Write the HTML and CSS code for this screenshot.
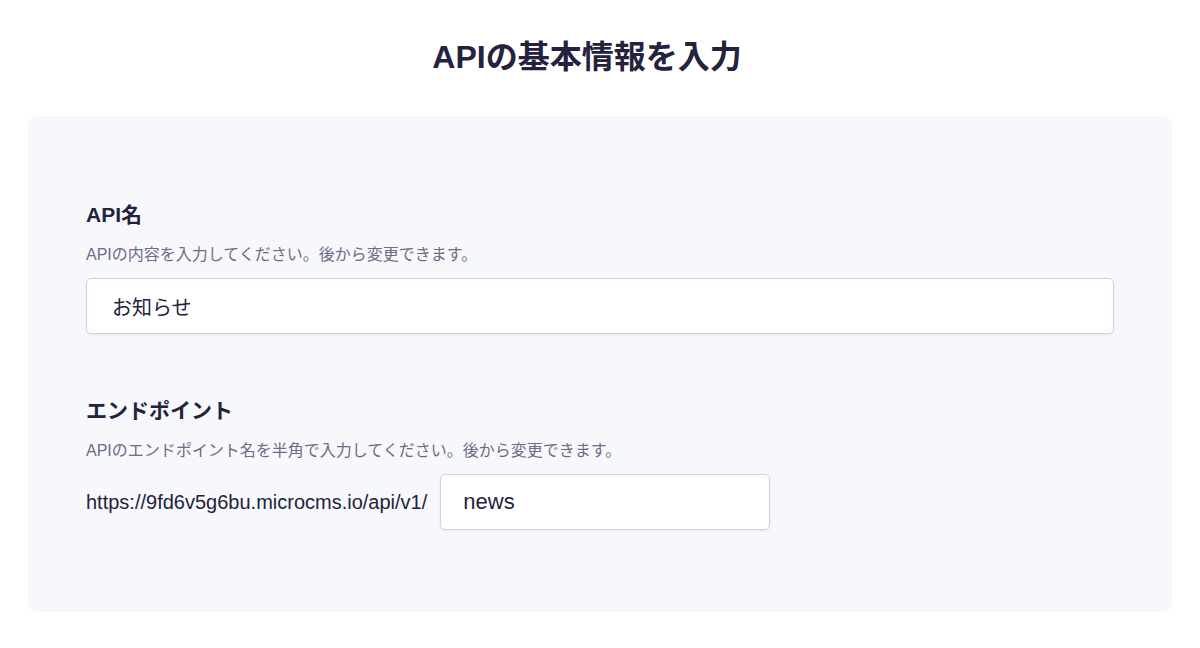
FILE: index.html
```html
<!DOCTYPE html>
<html lang="ja">
<head>
<meta charset="utf-8">
<title>APIの基本情報を入力</title>
<link rel="stylesheet" href="styles.css">
</head>
<body>
<h1 class="title">APIの基本情報を入力</h1>
<div class="card">
  <div class="field">
    <div class="label">API名</div>
    <div class="desc">APIの内容を入力してください。後から変更できます。</div>
    <input class="input input-full" type="text" value="お知らせ">
  </div>
  <div class="field field-2">
    <div class="label">エンドポイント</div>
    <div class="desc">APIのエンドポイント名を半角で入力してください。後から変更できます。</div>
    <div class="url-row">
      <span class="url">https://9fd6v5g6bu.microcms.io/api/v1/</span>
      <input class="input input-short" type="text" value="news">
    </div>
  </div>
</div>
</body>
</html>
```

FILE: styles.css
```css
* { box-sizing: border-box; }
body {
  margin: 0;
  background: #ffffff;
  font-family: "Liberation Sans", "Noto Sans CJK JP", sans-serif;
  color: #24223d;
}
.title {
  margin: 33px 0 35px;
  padding-right: 26px;
  font-size: 32px;
  line-height: 48px;
  font-weight: 700;
  text-align: center;
  color: #24223d;
}
.card {
  margin: 0 28px;
  background: #f7f8fc;
  border-radius: 10px;
  padding: 84px 58px 82px;
}
.label {
  font-size: 21px;
  line-height: 30px;
  font-weight: 700;
  color: #24223d;
}
.desc {
  margin-top: 14px;
  font-size: 16px;
  line-height: 22px;
  color: #6e6c86;
}
.input {
  display: block;
  height: 56px;
  border: 1px solid #d2d1e2;
  border-radius: 5px;
  background: #ffffff;
  box-shadow: 0 1px 2px rgba(120, 118, 160, 0.12);
  font-family: "Liberation Sans", "Noto Sans CJK JP", sans-serif;
  font-size: 20px;
  color: #24223d;
  outline: none;
}
.input-full {
  width: 100%;
  margin-top: 12px;
  padding: 0 25px;
}
.field-2 { margin-top: 62px; }
.url-row {
  margin-top: 12px;
  display: flex;
  align-items: center;
  gap: 13px;
}
.url {
  font-size: 20px;
  color: #24223d;
}
.input-short {
  width: 330px;
  padding: 0 22px;
  font-size: 22px;
}
```
